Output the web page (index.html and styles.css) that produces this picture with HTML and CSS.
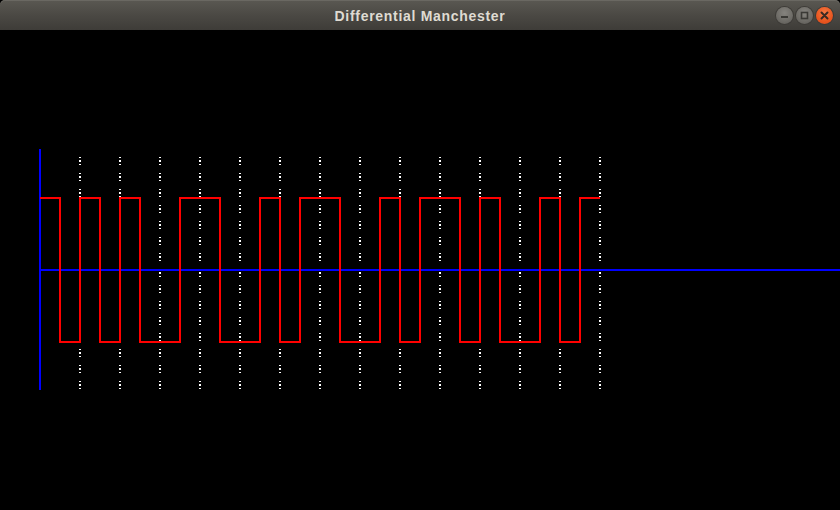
FILE: index.html
```html
<!DOCTYPE html>
<html>
<head>
<meta charset="utf-8">
<title>Differential Manchester</title>
<link rel="stylesheet" href="styles.css">
</head>
<body>
<div class="window">
  <header class="titlebar">
    <div class="spacer"></div>
    <div class="title">Differential Manchester</div>
    <div class="controls">
      <span class="btn btn-min"><svg width="17" height="17" viewBox="0 0 17 17"><rect x="5" y="9" width="7" height="2" fill="#3a3935"/></svg></span>
      <span class="btn btn-max"><svg width="17" height="17" viewBox="0 0 17 17"><rect x="5.5" y="5.5" width="6" height="6" fill="none" stroke="#3a3935" stroke-width="1.6"/></svg></span>
      <span class="btn btn-close"><svg width="17" height="17" viewBox="0 0 17 17"><path d="M5.5 5.5 L11.5 11.5 M11.5 5.5 L5.5 11.5" stroke="#3a2a22" stroke-width="2" stroke-linecap="round"/></svg></span>
    </div>
  </header>
  <main class="canvas">
    <svg class="plot" width="840" height="480" viewBox="0 30 840 480">
      <defs>
        <pattern id="dots" x="0" y="157" width="2" height="16" patternUnits="userSpaceOnUse">
          <rect x="0" y="0" width="2" height="1" fill="#ffffff"/>
          <rect x="0" y="3" width="2" height="2" fill="#ffffff"/>
          <rect x="0" y="7" width="2" height="1" fill="#ffffff"/>
        </pattern>
      </defs>
      <g class="grid" fill="url(#dots)">
        <rect x="79" y="157" width="2" height="233"/>
        <rect x="119" y="157" width="2" height="233"/>
        <rect x="159" y="157" width="2" height="233"/>
        <rect x="199" y="157" width="2" height="233"/>
        <rect x="239" y="157" width="2" height="233"/>
        <rect x="279" y="157" width="2" height="233"/>
        <rect x="319" y="157" width="2" height="233"/>
        <rect x="359" y="157" width="2" height="233"/>
        <rect x="399" y="157" width="2" height="233"/>
        <rect x="439" y="157" width="2" height="233"/>
        <rect x="479" y="157" width="2" height="233"/>
        <rect x="519" y="157" width="2" height="233"/>
        <rect x="559" y="157" width="2" height="233"/>
        <rect x="599" y="157" width="2" height="233"/>
      </g>
      <rect x="39" y="149" width="2" height="241" fill="#0000ff"/>
      <rect x="40" y="269" width="800" height="2" fill="#0000ff"/>
      <polyline fill="none" stroke="#ff0000" stroke-width="2" stroke-linejoin="miter"
        points="40,198 60,198 60,342 80,342 80,198 100,198 100,342 120,342 120,198 140,198 140,342 180,342 180,198 220,198 220,342 260,342 260,198 280,198 280,342 300,342 300,198 340,198 340,342 380,342 380,198 400,198 400,342 420,342 420,198 460,198 460,342 480,342 480,198 500,198 500,342 540,342 540,198 560,198 560,342 580,342 580,198 600,198"/>
    </svg>
  </main>
</div>
</body>
</html>
```
FILE: styles.css
```css
html, body {
  margin: 0;
  padding: 0;
  background: #000;
}

.window {
  width: 840px;
  height: 510px;
  display: flex;
  flex-direction: column;
  overflow: hidden;
}

.titlebar {
  height: 30px;
  flex: 0 0 30px;
  display: grid;
  grid-template-columns: 1fr auto 1fr;
  align-items: center;
  background: linear-gradient(#5a5852 0%, #4b4944 50%, #3e3c38 100%);
  box-shadow: inset 0 1px 0 #6a6862;
  border-radius: 5px 5px 0 0;
}

.title {
  font-family: "Liberation Sans", Arial, sans-serif;
  font-weight: bold;
  font-size: 14px;
  color: #dfdbd2;
  letter-spacing: 0.7px;
  padding-top: 1px;
}

.controls {
  display: flex;
  justify-content: flex-end;
  gap: 3px;
  padding-right: 7px;
}

.btn {
  width: 17px;
  height: 17px;
  border-radius: 50%;
  display: block;
  box-sizing: border-box;
}

.btn svg {
  display: block;
}

.btn-min,
.btn-max {
  background: radial-gradient(circle at 50% 35%, #85837e 0%, #6d6b66 60%, #5a5854 100%);
  box-shadow: 0 0 0 1px #3d3b37;
}

.btn-close {
  background: radial-gradient(circle at 50% 35%, #f47a45 0%, #e9561f 60%, #d8461a 100%);
  box-shadow: 0 0 0 1px #3d3b37;
}

.canvas {
  flex: 1;
  background: #000;
}

.plot {
  display: block;
}
```
